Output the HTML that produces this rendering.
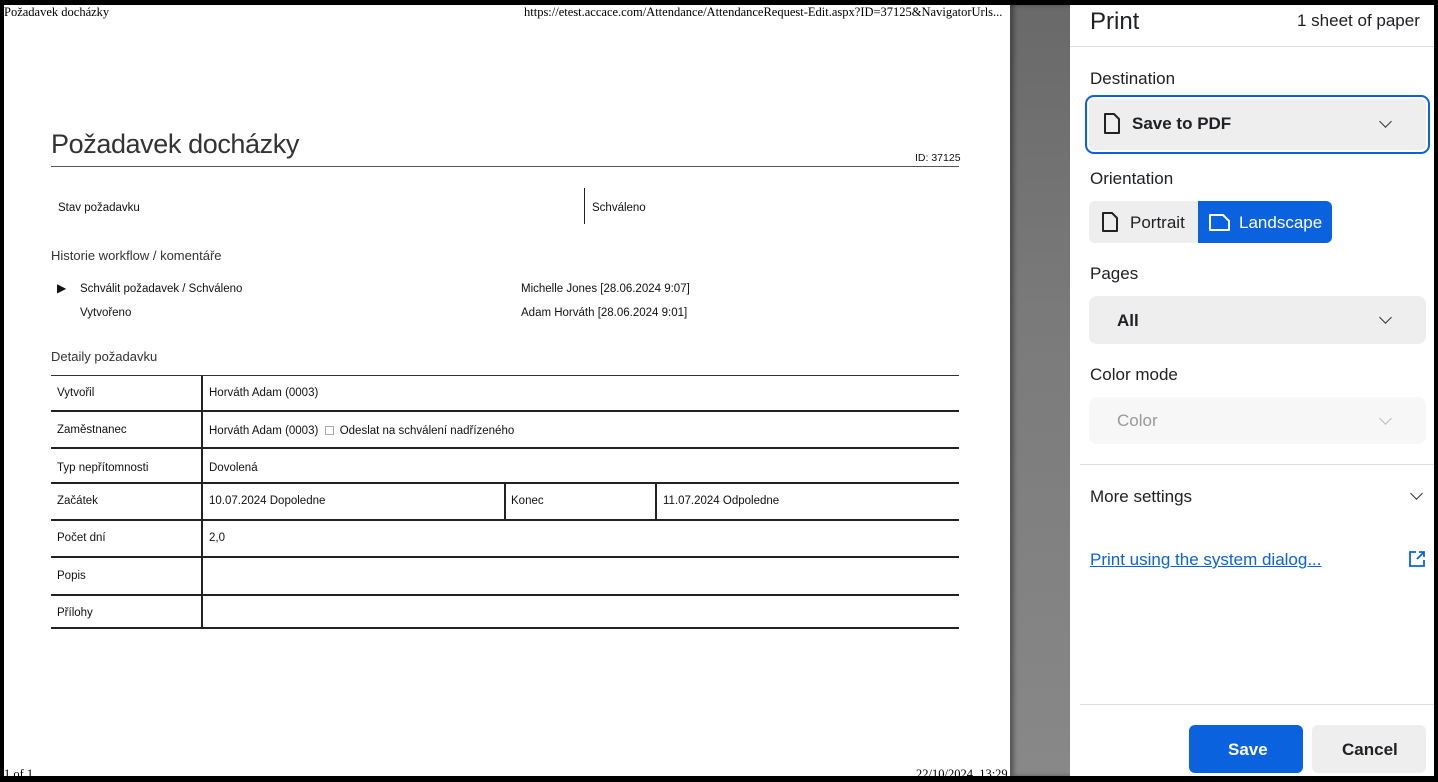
<!DOCTYPE html>
<html><head><meta charset="utf-8"><style>
*{margin:0;padding:0;box-sizing:border-box}
body{width:1438px;height:780px;background:#000;position:relative;overflow:hidden;font-family:"Liberation Sans",sans-serif}
.abs{position:absolute}
#page{left:4px;top:5px;width:1006px;height:771px;background:#fff;color:#111;font-size:11.5px}
#gray{left:1010px;top:5px;width:60px;height:771px;background:linear-gradient(#696969,#7a7a7a 40%,#888);box-shadow:inset 4px 0 4px rgba(0,0,0,.35)}
#side{left:1070px;top:5px;width:364px;height:771px;background:#fff;color:#202124}
.serif{font-family:"Liberation Serif",serif;font-size:12.5px;color:#000}
.hl{background:#222;height:2px}
.vl{background:#222;width:2px}
.t{position:absolute;white-space:nowrap}
.dd{position:absolute;background:#eee;border-radius:8px}
.lbl{position:absolute;font-size:17px;left:20px}
.chev{position:absolute;width:9px;height:9px;border-right:1.8px solid #333;border-bottom:1.8px solid #333;transform:rotate(45deg)}
</style></head><body>
<div id="page" class="abs">
  <div class="t serif" style="left:0;top:0">Požadavek docházky</div>
  <div class="t serif" style="left:520px;top:0">https://etest.accace.com/Attendance/AttendanceRequest-Edit.aspx?ID=37125&amp;NavigatorUrls...</div>
  <div class="t" style="left:47px;top:124px;font-size:27px;color:#333;letter-spacing:-0.4px">Požadavek docházky</div>
  <div class="t" style="left:911px;top:147px;font-size:10.5px">ID: 37125</div>
  <div class="abs" style="left:47px;top:161px;width:908px;height:1px;background:#555"></div>
  <div class="t" style="left:54px;top:197px">Stav požadavku</div>
  <div class="abs vl" style="left:580px;top:183px;width:1px;height:36px"></div>
  <div class="t" style="left:588px;top:197px">Schváleno</div>
  <div class="t" style="left:47px;top:243px;font-size:13px;color:#333">Historie workflow / komentáře</div>
  <div class="t" style="left:53px;top:276px;font-size:12px">▶</div>
  <div class="t" style="left:76px;top:278px">Schválit požadavek / Schváleno</div>
  <div class="t" style="left:517px;top:278px">Michelle Jones [28.06.2024 9:07]</div>
  <div class="t" style="left:76px;top:302px">Vytvořeno</div>
  <div class="t" style="left:517px;top:302px">Adam Horváth [28.06.2024 9:01]</div>
  <div class="t" style="left:47px;top:344px;font-size:13px;color:#333">Detaily požadavku</div>
  <div class="abs hl" style="left:47px;top:370px;width:908px;height:1px;background:#333"></div>
  <div class="abs hl" style="left:47px;top:405px;width:908px"></div>
  <div class="abs hl" style="left:47px;top:442px;width:908px"></div>
  <div class="abs hl" style="left:47px;top:477px;width:908px"></div>
  <div class="abs hl" style="left:47px;top:514px;width:908px"></div>
  <div class="abs hl" style="left:47px;top:551px;width:908px"></div>
  <div class="abs hl" style="left:47px;top:589px;width:908px"></div>
  <div class="abs hl" style="left:47px;top:622px;width:908px"></div>
  <div class="abs vl" style="left:197px;top:371px;height:252px"></div>
  <div class="abs vl" style="left:500px;top:478px;height:37px"></div>
  <div class="abs vl" style="left:651px;top:478px;height:37px"></div>
  <div class="t" style="left:53px;top:382px">Vytvořil</div>
  <div class="t" style="left:205px;top:382px">Horváth Adam (0003)</div>
  <div class="t" style="left:53px;top:419px">Zaměstnanec</div>
  <div class="t" style="left:205px;top:420px">Horváth Adam (0003) <span style="display:inline-block;width:9px;height:9px;border:1px solid #aaa;margin:0 3px -1px 3px"></span> Odeslat na schválení nadřízeného</div>
  <div class="t" style="left:53px;top:457px">Typ nepřítomnosti</div>
  <div class="t" style="left:205px;top:457px">Dovolená</div>
  <div class="t" style="left:53px;top:490px">Začátek</div>
  <div class="t" style="left:205px;top:490px">10.07.2024 Dopoledne</div>
  <div class="t" style="left:507px;top:490px">Konec</div>
  <div class="t" style="left:659px;top:490px">11.07.2024 Odpoledne</div>
  <div class="t" style="left:53px;top:527px">Počet dní</div>
  <div class="t" style="left:205px;top:527px">2,0</div>
  <div class="t" style="left:53px;top:565px">Popis</div>
  <div class="t" style="left:53px;top:602px">Přílohy</div>
  <div class="t serif" style="left:0;top:762px">1 of 1</div>
  <div class="t serif" style="left:912px;top:762px">22/10/2024, 13:29</div>
</div>
<div id="gray" class="abs"></div>
<div id="side" class="abs">
  <div class="t" style="left:20px;top:3px;font-size:24px">Print</div>
  <div class="t" style="left:227px;top:6px;font-size:17px">1 sheet of paper</div>
  <div class="abs" style="left:0;top:41px;width:364px;height:1px;background:#ddd"></div>
  <div class="lbl" style="top:64px">Destination</div>
  <div class="dd" style="left:15px;top:90px;width:345px;height:59px;border:2px solid #0b62de;border-radius:9px;background:#eee;box-shadow:inset 0 0 0 2px #fff"></div>
  <svg class="abs" style="left:33px;top:108px" width="18" height="22" viewBox="0 0 18 22"><path d="M2 1h9l5 5v14H2z" fill="none" stroke="#222" stroke-width="2" stroke-linejoin="round"/></svg>
  <div class="t" style="left:62px;top:109px;font-size:17px;font-weight:bold">Save to PDF</div>
  <div class="chev" style="left:311px;top:112px"></div>
  <div class="lbl" style="top:164px">Orientation</div>
  <div class="dd" style="left:19px;top:196px;width:243px;height:42px;border-radius:6px"></div>
  <div class="abs" style="left:128px;top:196px;width:134px;height:42px;background:#0b62de;border-radius:0 6px 6px 0"></div>
  <svg class="abs" style="left:31px;top:207px" width="18" height="21" viewBox="0 0 18 21"><path d="M2 1h9l5 5v13H2z" fill="none" stroke="#222" stroke-width="2" stroke-linejoin="round"/></svg>
  <div class="t" style="left:60px;top:208px;font-size:17px">Portrait</div>
  <svg class="abs" style="left:138px;top:208px" width="23" height="19" viewBox="0 0 23 19"><path d="M2 2h13l6 6v9H2z" fill="none" stroke="#fff" stroke-width="2" stroke-linejoin="round"/></svg>
  <div class="t" style="left:169px;top:208px;font-size:17px;color:#fff">Landscape</div>
  <div class="lbl" style="top:259px">Pages</div>
  <div class="dd" style="left:19px;top:291px;width:337px;height:48px"></div>
  <div class="t" style="left:47px;top:306px;font-size:17px;font-weight:bold">All</div>
  <div class="chev" style="left:311px;top:308px"></div>
  <div class="lbl" style="top:360px">Color mode</div>
  <div class="dd" style="left:19px;top:392px;width:337px;height:47px;background:#f7f7f7"></div>
  <div class="t" style="left:47px;top:406px;font-size:17px;color:#999">Color</div>
  <div class="chev" style="left:311px;top:409px;border-color:#bbb"></div>
  <div class="abs" style="left:10px;top:459px;width:354px;height:1px;background:#ddd"></div>
  <div class="lbl" style="top:482px">More settings</div>
  <div class="chev" style="left:342px;top:484px"></div>
  <div class="t" style="left:20px;top:545px;font-size:17px;color:#0b62de;text-decoration:underline">Print using the system dialog...</div>
  <svg class="abs" style="left:338px;top:545px" width="18" height="18" viewBox="0 0 18 18"><path d="M8 2H2v14h14v-6M11 2h5v5M16 2l-7 7" fill="none" stroke="#0b62de" stroke-width="1.8"/></svg>
  <div class="abs" style="left:10px;top:699px;width:354px;height:1px;background:#ddd"></div>
  <div class="abs" style="left:119px;top:720px;width:114px;height:48px;background:#0b62de;border-radius:6px"></div>
  <div class="t" style="left:158px;top:735px;font-size:17px;font-weight:bold;color:#fff">Save</div>
  <div class="abs" style="left:242px;top:720px;width:114px;height:48px;background:#eee;border-radius:6px"></div>
  <div class="t" style="left:272px;top:735px;font-size:17px;font-weight:bold">Cancel</div>
</div>
</body></html>
